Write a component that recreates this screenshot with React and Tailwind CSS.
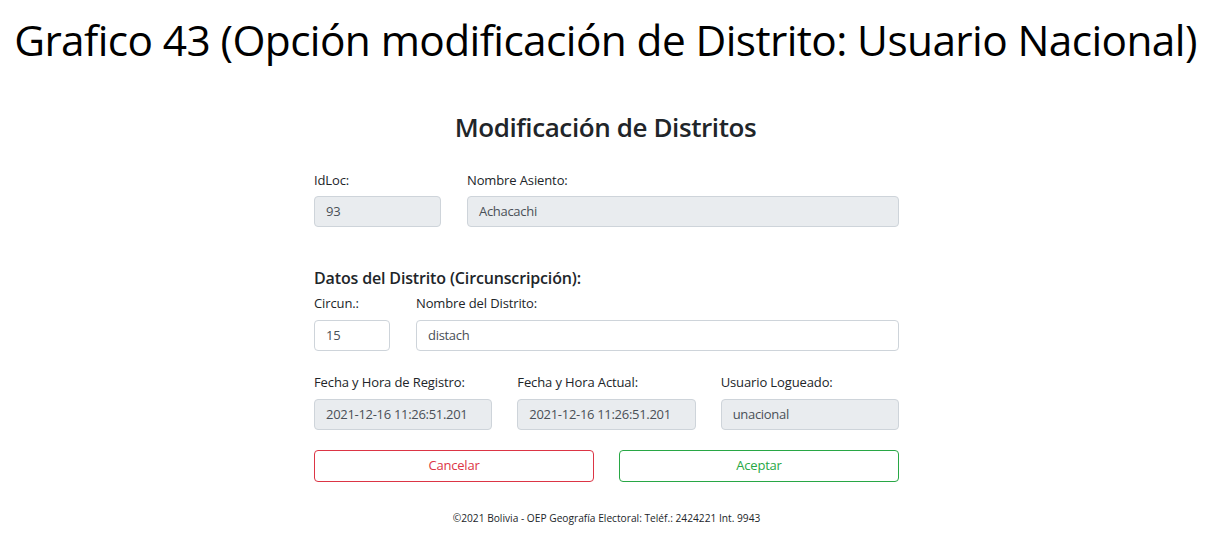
export default function App() {
  const ui = { fontFamily: '"Open Sans", "Noto Sans", sans-serif' };
  const label = "text-[13px] text-[#212529] leading-[18px] tracking-[-0.12px]";
  const inputRO =
    "h-[31px] rounded-[4px] border border-[#ced4da] bg-[#e9ecef] px-[11px] flex items-center text-[13px] text-[#495057] tracking-[-0.3px]";
  const inputRW =
    "h-[31px] rounded-[4px] border border-[#ced4da] bg-white px-[11px] flex items-center text-[13px] text-[#495057] tracking-[-0.3px]";
  return (
    <div className="w-[1211px] h-[550px] bg-white overflow-hidden">
      <div
        className="h-[84px] pt-[11px] text-center text-[42.4px] leading-[58px] text-black tracking-[-0.6px]"
        style={{ fontFamily: '"Open Sans", sans-serif' }}
      >
        Grafico 43 (Opción modificación de Distrito: Usuario Nacional)
      </div>
      <div style={ui} className="flex flex-col items-center">
        <h1 className="mt-[26px] text-[26px] leading-[34px] font-semibold text-[#212529] tracking-[-0.4px]">
          Modificación de Distritos
        </h1>
        <div className="w-[585px] ml-[2px] mt-[27px] flex flex-col">
          <div className="flex gap-[26px]">
            <div className="w-[127px] flex flex-col gap-[7px]">
              <span className={label}>IdLoc:</span>
              <div className={inputRO}>93</div>
            </div>
            <div className="flex-1 flex flex-col gap-[7px]">
              <span className={label}>Nombre Asiento:</span>
              <div className={inputRO}>Achacachi</div>
            </div>
          </div>
          <div className="mt-[40px] text-[16px] leading-[22px] font-semibold text-[#212529] tracking-[-0.15px]">
            Datos del Distrito (Circunscripción):
          </div>
          <div className="mt-[5px] flex gap-[26px]">
            <div className="w-[76px] flex flex-col gap-[8px]">
              <span className={label}>Circun.:</span>
              <div className={inputRW}>15</div>
            </div>
            <div className="flex-1 flex flex-col gap-[8px]">
              <span className={label}>Nombre del Distrito:</span>
              <div className={inputRW}>distach</div>
            </div>
          </div>
          <div className="mt-[22px] grid grid-cols-3 gap-[25px]">
            <div className="flex flex-col gap-[8px]">
              <span className={label}>Fecha y Hora de Registro:</span>
              <div className={inputRO}>2021-12-16 11:26:51.201</div>
            </div>
            <div className="flex flex-col gap-[8px]">
              <span className={label}>Fecha y Hora Actual:</span>
              <div className={inputRO}>2021-12-16 11:26:51.201</div>
            </div>
            <div className="flex flex-col gap-[8px]">
              <span className={label}>Usuario Logueado:</span>
              <div className={inputRO}>unacional</div>
            </div>
          </div>
          <div className="mt-[20px] grid grid-cols-2 gap-[25px]">
            <button className="h-[32px] rounded-[4px] border border-[#dc3545] bg-white text-[13px] text-[#dc3545] tracking-[-0.2px]">
              Cancelar
            </button>
            <button className="h-[32px] rounded-[4px] border border-[#28a745] bg-white text-[13px] text-[#28a745] tracking-[-0.2px]">
              Aceptar
            </button>
          </div>
        </div>
        <div className="mt-[29px] ml-[2px] text-[10.2px] leading-[14px] text-[#212529]">
          ©2021 Bolivia - OEP Geografía Electoral: Teléf.: 2424221 Int. 9943
        </div>
      </div>
    </div>
  );
}
